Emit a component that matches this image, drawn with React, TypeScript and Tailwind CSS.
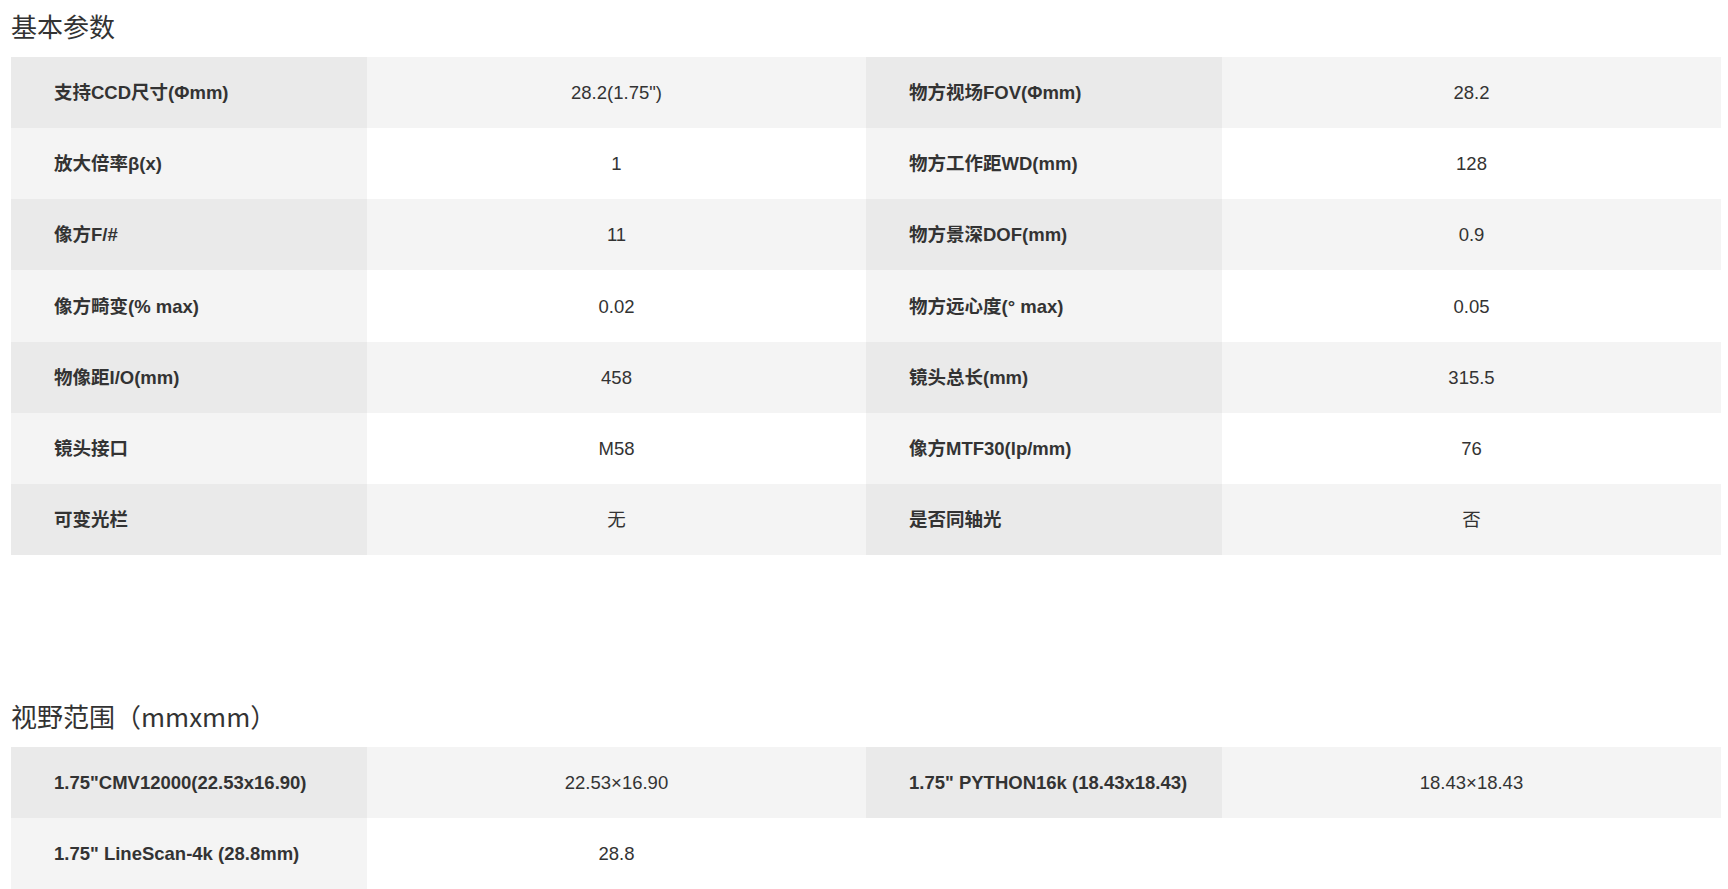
type Cell = { label: string; value: string };

const basicRows: Cell[][] = [
  [
    { label: "支持CCD尺寸(Φmm)", value: '28.2(1.75")' },
    { label: "物方视场FOV(Φmm)", value: "28.2" },
  ],
  [
    { label: "放大倍率β(x)", value: "1" },
    { label: "物方工作距WD(mm)", value: "128" },
  ],
  [
    { label: "像方F/#", value: "11" },
    { label: "物方景深DOF(mm)", value: "0.9" },
  ],
  [
    { label: "像方畸变(% max)", value: "0.02" },
    { label: "物方远心度(° max)", value: "0.05" },
  ],
  [
    { label: "物像距I/O(mm)", value: "458" },
    { label: "镜头总长(mm)", value: "315.5" },
  ],
  [
    { label: "镜头接口", value: "M58" },
    { label: "像方MTF30(lp/mm)", value: "76" },
  ],
  [
    { label: "可变光栏", value: "无" },
    { label: "是否同轴光", value: "否" },
  ],
];

const fovRows: Cell[][] = [
  [
    { label: '1.75"CMV12000(22.53x16.90)', value: "22.53×16.90" },
    { label: '1.75" PYTHON16k (18.43x18.43)', value: "18.43×18.43" },
  ],
  [{ label: '1.75" LineScan-4k (28.8mm)', value: "28.8" }],
];

function SpecTable({ rows }: { rows: Cell[][] }) {
  return (
    <div className="w-[1710px]">
      {rows.map((row, i) => {
        const odd = i % 2 === 0;
        return (
          <div
            key={i}
            className={`grid h-[71.15px] grid-cols-[356px_499px_356px_499px] ${odd ? "bg-[#f4f4f4]" : "bg-white"}`}
          >
            {row.map((c) => (
              <div key={c.label} className="contents">
                <div
                  className={`flex items-center pt-[1px] pl-[43px] text-[18.5px] font-bold text-[#333] ${odd ? "bg-[#eaeaea]" : "bg-[#f4f4f4]"}`}
                >
                  {c.label}
                </div>
                <div className="flex items-center justify-center pt-[1px] text-[18.5px] text-[#333]">
                  {c.value}
                </div>
              </div>
            ))}
          </div>
        );
      })}
    </div>
  );
}

function SectionTitle({ text }: { text: string }) {
  return (
    <h2 className="mb-[5px] text-[26px] font-normal leading-[52px] text-[#333] [font-family:'Noto_Sans_CJK_SC',sans-serif]">
      {text}
    </h2>
  );
}

export default function App() {
  return (
    <div className="min-h-[889px] bg-white pl-[11px] pr-[7px] [font-family:'Liberation_Sans','Noto_Sans_CJK_SC',sans-serif]">
      {/* 基本参数 */}
      <section>
        <SectionTitle text="基本参数" />
        <SpecTable rows={basicRows} />
      </section>

      {/* 视野范围 */}
      <section className="mt-[135px]">
        <SectionTitle text="视野范围（mmxmm）" />
        <SpecTable rows={fovRows} />
      </section>
    </div>
  );
}
